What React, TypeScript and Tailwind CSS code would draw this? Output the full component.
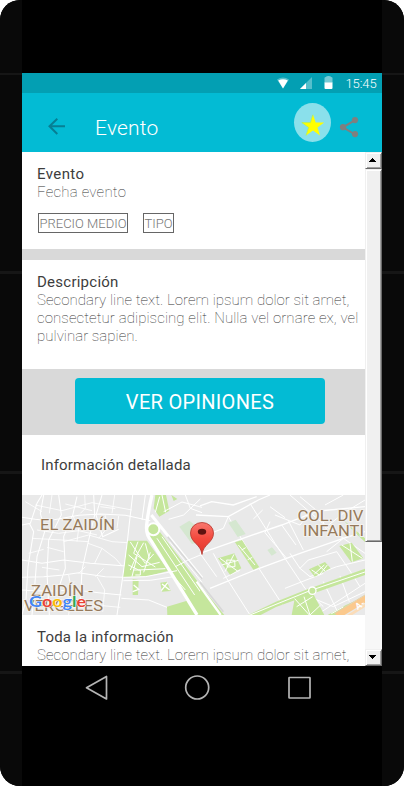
import React from "react";

function Rail() {
  return (
    <div className="flex w-[22px] shrink-0 flex-col bg-[#090909]">
      <div className="mt-[73px] h-[2px] bg-[#161616]" />
      <div className="mt-[196px] h-[3px] bg-[#161616]" />
      <div className="mt-[197px] h-[3px] bg-[#161616]" />
      <div className="mt-[197px] h-[3px] bg-[#161616]" />
    </div>
  );
}

function StatusBar() {
  return (
    <div className="flex h-5 items-start bg-[#039fb3] pl-[255px] text-white">
      <svg width="12" height="12" viewBox="0 0 12 12" className="mt-1">
        <path d="M0 2.4Q6-1.6 12 2.4L6 11.5Z" fill="#55bfcc" />
        <path d="M1.2 3.6Q6 .8 10.800 3.6L6 11.5Z" fill="#fff" />
      </svg>
      <svg width="12" height="12" viewBox="0 0 12 12" className="ml-[10.5px] mt-1">
        <path d="M0 12 12 0V12Z" fill="#55bfcc" />
        <path d="M0 12 6 6V12Z" fill="#fff" />
      </svg>
      <svg width="9" height="13" viewBox="0 0 9 13" className="ml-[12px] mt-[3px]">
        <path d="M.5 2Q.5 1 2 1Q2 0 4.500 0Q7 0 7 1Q8.500 1 8.500 2V7H.5Z" fill="#75cad5" />
        <path d="M.5 6.500H8.500V12Q8.500 13 7.500 13H1.500Q.5 13 .5 12Z" fill="#fff" />
      </svg>
      <span className="ml-[13px] mt-[2px] whitespace-nowrap text-[13px] font-light leading-[18px] tracking-[-0.1px]">15:45</span>
    </div>
  );
}

function AppBar() {
  return (
    <header className="flex h-[59px] items-start bg-[#03bbd4]">
      <svg width="17" height="17" viewBox="0 0 17 17" className="ml-[26px] mt-[25px]" fill="none" stroke="#077f94" strokeWidth="2">
        <path d="M9.300.8 1.500 8.300 9.300 16M1.500 8.300H17" />
      </svg>
      <h1 className="ml-[30px] mt-[22px] w-[64px] whitespace-nowrap text-[21px] font-light leading-[26px] tracking-[0.2px] text-white">Evento</h1>
      <div className="ml-[135px] mt-[10px] flex h-[39px] w-[37px] items-start justify-center rounded-[50%] bg-[#8ae0eb]">
        <svg width="24" height="23" viewBox="0 0 24 23" className="mt-[11px]">
          <path d="M12 .5 14.700 8.600H23.200L16.500 13.500 19 21.500 12 16.600 5 21.500 7.600 13.500.8 8.600H9.400Z" fill="#ffff00" />
          <path d="M11.700.8 9.400 8.600H.8L7.600 13.500 5 21.500" fill="none" stroke="#b3ef52" strokeWidth=".7" />
        </svg>
      </div>
      <svg width="20" height="21" viewBox="0 0 20 21" className="ml-[8px] mt-[24px]" fill="#7f7f7f">
        <path d="M16 3.200 4 10.300 16 17.500" fill="none" stroke="#7f7f7f" strokeWidth="2" />
        <circle cx="16" cy="3.100" r="3.100" />
        <circle cx="4" cy="10.200" r="3.100" />
        <circle cx="16" cy="17.100" r="3.100" />
      </svg>
    </header>
  );
}

function StreetMap() {
  return (
    <svg width="343" height="120" viewBox="0 0 343 120" className="block shrink-0 bg-[#e9e9e9]">
      <defs>
        <linearGradient id="pin" x1="0" y1="0" x2="0" y2="1">
          <stop offset="0" stopColor="#f9776e" />
          <stop offset=".5" stopColor="#f2493d" />
          <stop offset="1" stopColor="#e0352b" />
        </linearGradient>
      </defs>
      <g transform="translate(0 -5) scale(.33333)" fill="none" stroke="#fff" strokeWidth="4">
        <path d="M0 82 40 88 80 92 170 76 235 72 310 76 385 92M0 105 25 100 45 40 60 15M22 100 35 125 18 230 12 330 0 375M65 15 55 70 68 125 45 200 38 290 30 375M110 15 118 75 80 150 75 250 82 375M0 210 60 220 125 210 205 220 310 228M0 262 65 260 125 255 170 248 250 260 302 262M0 300 75 304 160 300 230 308 298 315M165 20 152 76 125 140 130 235 108 300M215 15 218 75 200 150 180 240 175 330M240 15 222 75 242 140 290 118M332 15 322 100 316 155 302 262 285 375M370 15 360 90" strokeWidth="3.200" />
        <path d="M40 45 120 62 210 38 330 60M130 42 210 62M10 35 60 65M30 145 120 150 200 155M75 172 125 185M20 190 65 178M125 155 200 135 270 155 315 158M198 160 240 175 218 220M240 175 280 205 300 228M45 120 110 130 170 122 225 135M152 76 170 115 165 155M188 15 190 55 175 70M90 15 82 70M250 75 255 115 230 145M290 78 285 115M60 232 112 240M190 230 170 250M225 260 248 300 242 365M245 235 220 260M50 340 110 350 165 340 295 352M140 255 148 300 140 375M278 15 270 70M235 50 280 56" strokeWidth="2.500" />
        <path d="M400 15H432L442 62 412 80 395 55ZM318 152H375L440 242 380 258 304 262ZM378 136 412 124 540 292V375H518ZM332 268 350 270 348 315H332ZM415 278 435 275 446 303 420 305ZM435 350 515 326 540 375H436ZM448 15 466 27 455 33Z" fill="#c5e69c" stroke="none" />
        <path d="M390 15Q378 65 374 105Q371 134 388 153L525 375" strokeWidth="10" />
        <path d="M388 75 425 121 540 264" strokeWidth="9" />
        <path d="M437 140 540 266" stroke="#d7d7d7" strokeWidth="5" />
        <path d="M442 155 540 277M405 145 518 315M420 140 535 305" strokeWidth="3" />
        <circle cx="394" cy="118" r="18" fill="#c5e69c" strokeWidth="6" />
        <path d="M325 156 347 190 325 240M348 155 335 190 400 231M365 158 347 190 370 220 395 192M320 195 360 230 413 217M319 225 350 240 430 236M334 240H355V255H340M385 187 365 247M345 200 330 260M370 160 382 205M413 20 400 67M420 15 431 67" strokeWidth="3" />
        <path d="M335 285 350 298 332 305M420 282 443 300M437 278 418 302" strokeWidth="4" />
        <path d="M304 262 370 260 465 242M304 272 385 271 455 260 490 300M298 325 380 330 435 352M425 65 480 36 540 52M440 88 485 75 535 27M490 15 505 55 540 68M460 230 497 211 540 193" strokeWidth="3" />
        <path d="M472 110 502 92 540 122V155L510 162Z" fill="#d5e7d0" stroke="none" />
      </g>
      <g transform="translate(178 -5) scale(.33333)" fill="none" stroke="#fff" strokeWidth="4">
        <path d="M-12 75 85 80 175 30 210 15M0 48 35 35 100 45 170 20M0 190 120 148 245 105 355 63 495 50M30 295 180 234 300 190 430 145 495 125M150 375 240 340 330 300 495 240" />
        <path d="M85 80 180 240 248 345M120 148 145 190M150 40 225 160 315 295 370 350M188 60 160 87M210 95 195 128 260 205M245 105 288 165M265 92 310 180M225 75 300 105 320 80M210 50 255 83M270 15 380 110 495 190M300 20 360 70M355 63 385 130M40 190 80 265 150 375M0 190 50 260M70 265 120 240M270 190 300 235 325 210 410 185 455 250 480 290M300 235 330 260 410 230 495 210M255 295 370 250M380 110 430 70 495 30M375 45 430 15M430 145 380 185M340 325 400 350 495 305M370 275 410 360M420 258 448 335M350 375 495 280M20 135 70 115 85 80" strokeWidth="3" />
        <path d="M85 98 107 89 137 132 113 141ZM202 180 216 172 230 188 215 197Z" fill="#d5e7d0" stroke="none" />
        <path d="M105 157 126 150 178 232 160 239ZM54 205 103 190 124 235 90 254ZM327 238 375 216 392 235 344 260ZM418 168 455 158 490 205 454 217ZM430 90 495 145V156L462 125ZM145 375 228 335 322 298 495 236V255L350 307 228 351 182 375ZM284 326 340 312 373 375H275ZM383 375 438 345 495 320 420 375ZM0 285 73 375H0Z" fill="#c5e69c" stroke="none" />
        <path d="M115 165 165 225M125 180 137 173M143 209 157 202M60 205 115 245M102 193 75 245M65 225 115 211M80 210 104 211 105 230 82 231ZM335 240 358 255 382 225M355 225 375 243M343 252 373 225M425 165 487 205M450 160 457 215M145 377 228 343 330 302 495 246" strokeWidth="3" />
        <path d="M284 326 328 375M312 320 330 375 362 345M290 350 338 320M394 371 430 351M415 371 470 330" strokeWidth="3" />
        <circle cx="337" cy="302" r="11" fill="#c5e69c" strokeWidth="4" />
        <path d="M0 277 70 365" stroke="#d7d7d7" strokeWidth="5" />
        <path d="M-10 275 62 375" strokeWidth="7" />
        <path d="M410 378 500 324" stroke="#fbc98d" strokeWidth="19" />
        <path d="M445 378 500 343" stroke="#fbdcb8" strokeWidth="8" />
        <path d="M403 370 495 315" stroke="#e2d3ae" strokeWidth="3" />
      </g>
      <g fontFamily="Roboto, sans-serif" fill="#967a5b" stroke="#f3f1ee" strokeWidth="2" paintOrder="stroke">
        <text x="18" y="34.500" fontSize="14" textLength="75" lengthAdjust="spacingAndGlyphs">EL ZAIDÍN</text>
        <text x="9" y="100.500" fontSize="14" textLength="62" lengthAdjust="spacingAndGlyphs">ZAIDÍN -</text>
        <text x="2" y="115.700" fontSize="14" textLength="79" lengthAdjust="spacingAndGlyphs">VERGELES</text>
        <text x="275.500" y="25.500" fontSize="14" textLength="66" lengthAdjust="spacingAndGlyphs">COL. DIV</text>
        <text x="281" y="41" fontSize="14" textLength="61" lengthAdjust="spacingAndGlyphs">INFANTI</text>
        <text transform="translate(335.500 115) rotate(-32)" fontSize="9" fill="#fff" stroke="none" fontWeight="700">A-</text>
      </g>
      <text x="7" y="111.500" fontFamily="Lato, sans-serif" fontWeight="700" fontSize="15.500" textLength="57" lengthAdjust="spacingAndGlyphs" stroke="#fff" strokeWidth="1" paintOrder="stroke">
        <tspan fill="#4285f4">G</tspan><tspan fill="#ea4335">o</tspan><tspan fill="#fbbc05">o</tspan><tspan fill="#4285f4">g</tspan><tspan fill="#34a853">l</tspan><tspan fill="#ea4335">e</tspan>
      </text>
      <path d="M180 59.500C179 49 168.500 48 168.500 38A11.500 10.500 0 0 1 191.500 38C191.500 48 181 49 180 59.500Z" fill="url(#pin)" stroke="#b5352c" strokeWidth=".8" />
      <ellipse cx="180" cy="36.800" rx="4.200" ry="3" fill="#5e1310" />
    </svg>
  );
}

function ScrollBar() {
  const raised = "shrink-0 border border-t-[#f0f0f0] border-l-[#f0f0f0] border-r-[#696969] border-b-[#696969] bg-[#f0f0f0] shadow-[inset_1px_1px_#fff,inset_-1px_-1px_#a0a0a0]";
  return (
    <div className="flex h-[514px] w-[17px] shrink-0 flex-col bg-[#f7f7f7]">
      <div className={`${raised} flex h-[17px] justify-start pl-[3px] pt-[5px]`}>
        <svg width="7" height="4" shapeRendering="crispEdges"><path d="M3 0H4V1H5V2H6V3H7V4H0V3H1V2H2V1H3Z" /></svg>
      </div>
      <div className={`${raised} h-[373px]`} />
      <div className="flex-1" />
      <div className={`${raised} flex h-[17px] justify-start pl-[3px] pt-[5px]`}>
        <svg width="7" height="4" shapeRendering="crispEdges"><path d="M0 0H7V1H6V2H5V3H4V4H3V3H2V2H1V1H0Z" /></svg>
      </div>
    </div>
  );
}

const heading = "whitespace-nowrap text-[15px] leading-[18px] text-[#3d3d3d]";
const body = "whitespace-nowrap text-[15px] font-thin leading-[18px] text-[#333]";

export default function App() {
  return (
    <div className="h-[787px] w-[404px] overflow-hidden bg-white font-['Roboto',sans-serif]">
      <div className="flex h-[786px] overflow-hidden rounded-[20px] bg-black">
        <Rail />
        <div className="flex w-[360px] flex-col bg-black pt-[73px]">
          <StatusBar />
          <AppBar />
          <div className="flex h-[514px] shrink-0 overflow-hidden bg-white">
            <main className="flex h-[514px] w-[343px] flex-col overflow-hidden">
              <section className="h-[97px] shrink-0 px-[15px] pt-[13px]">
                <h2 className={`${heading} tracking-[0.4px]`}>Evento</h2>
                <p className={`${body} tracking-[0.22px]`}>Fecha evento</p>
                <div className="ml-px mt-3 flex gap-[15px] text-[13px] font-light leading-[19px] text-[#777]">
                  <span className="flex h-5 w-[90px] justify-center whitespace-nowrap border border-[#666]">PRECIO MEDIO</span>
                  <span className="flex h-5 w-[31px] justify-center whitespace-nowrap border border-[#666]">TIPO</span>
                </div>
              </section>
              <div className="h-[11px] shrink-0 bg-[#d9d9d9]" />
              <section className="h-[109px] shrink-0 px-[15px] pt-[13px]">
                <h2 className={`${heading} tracking-[0.25px]`}>Descripción</h2>
                <p className={`${body} tracking-[0.04px]`}>
                  Secondary line text. Lorem ipsum dolor sit amet,<br />
                  <span className="tracking-[0.09px]">consectetur adipiscing elit. Nulla vel ornare ex, vel</span><br />
                  pulvinar sapien.
                </p>
              </section>
              <div className="flex h-[66px] shrink-0 bg-[#d9d9d9] pl-[53px] pt-[9px]">
                <button className="flex h-[46px] w-[250px] items-center justify-center rounded-[4px] bg-[#03bbd4] pt-[2px] text-[20px] tracking-[0.32px] text-white">VER OPINIONES</button>
              </div>
              <h2 className={`${heading} h-[60px] shrink-0 pl-[19px] pt-[21px] tracking-[0.18px]`}>Información detallada</h2>
              <StreetMap />
              <section className="shrink-0 px-[15px] pt-[13px]">
                <h2 className={`${heading} tracking-[0.19px]`}>Toda la información</h2>
                <p className={`${body} tracking-[0.04px]`}>Secondary line text. Lorem ipsum dolor sit amet,</p>
              </section>
            </main>
            <ScrollBar />
          </div>
          <nav className="flex pl-[63px] pt-[9px]">
            <svg width="237" height="26" viewBox="0 0 237 26" fill="none" stroke="#b5b5b5" strokeWidth="1.7" strokeLinejoin="round">
              <path d="M21.500 1.500V24L1.500 12.700Z" />
              <circle cx="112.200" cy="12.500" r="11.500" />
              <rect x="204" y="2.500" width="21" height="20.500" rx=".5" />
            </svg>
          </nav>
        </div>
        <Rail />
      </div>
    </div>
  );
}
